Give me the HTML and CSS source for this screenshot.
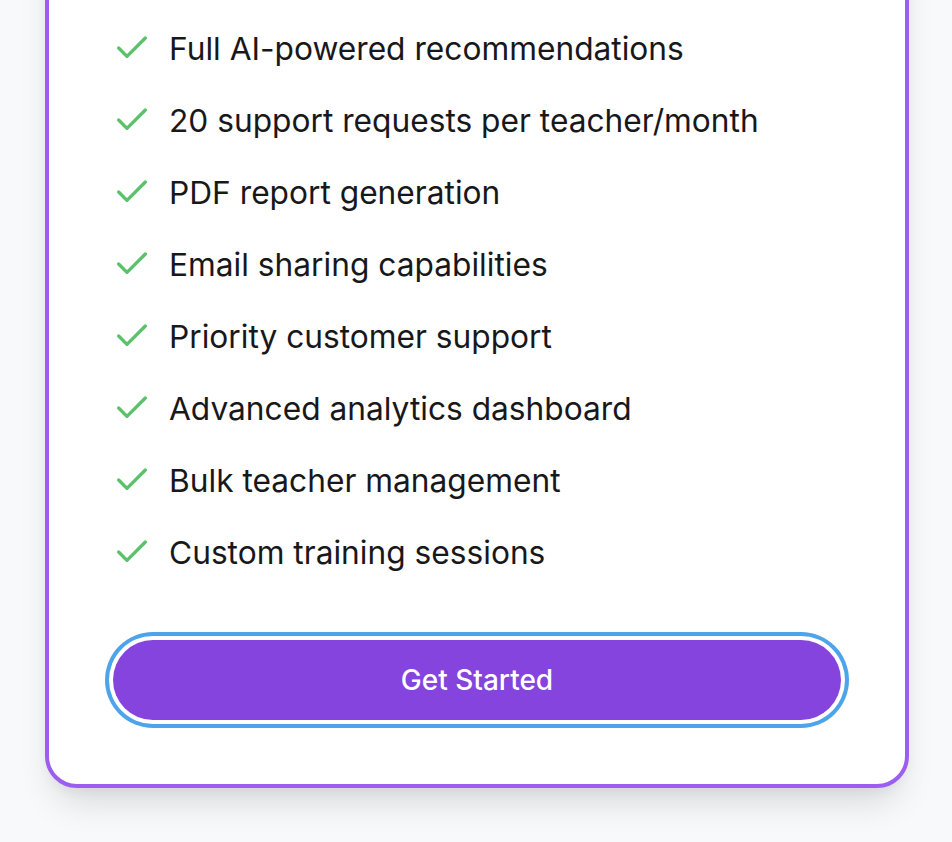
FILE: index.html
```html
<!DOCTYPE html>
<html lang="en">
<head>
<meta charset="utf-8">
<title>Pricing plan</title>
<link rel="stylesheet" href="styles.css">
</head>
<body>
<div class="page">
  <div class="card">
    <ul class="features">
      <li class="feature"><svg class="check" viewBox="0 0 24 24"><path d="M20 6 9 17l-5-5"/></svg><span>Full AI-powered recommendations</span></li>
      <li class="feature"><svg class="check" viewBox="0 0 24 24"><path d="M20 6 9 17l-5-5"/></svg><span>20 support requests per teacher/month</span></li>
      <li class="feature"><svg class="check" viewBox="0 0 24 24"><path d="M20 6 9 17l-5-5"/></svg><span>PDF report generation</span></li>
      <li class="feature"><svg class="check" viewBox="0 0 24 24"><path d="M20 6 9 17l-5-5"/></svg><span>Email sharing capabilities</span></li>
      <li class="feature"><svg class="check" viewBox="0 0 24 24"><path d="M20 6 9 17l-5-5"/></svg><span>Priority customer support</span></li>
      <li class="feature"><svg class="check" viewBox="0 0 24 24"><path d="M20 6 9 17l-5-5"/></svg><span>Advanced analytics dashboard</span></li>
      <li class="feature"><svg class="check" viewBox="0 0 24 24"><path d="M20 6 9 17l-5-5"/></svg><span>Bulk teacher management</span></li>
      <li class="feature"><svg class="check" viewBox="0 0 24 24"><path d="M20 6 9 17l-5-5"/></svg><span>Custom training sessions</span></li>
    </ul>
    <button class="cta" type="button">Get Started</button>
  </div>
</div>
</body>
</html>
```

FILE: styles.css
```css
html, body {
  margin: 0;
  padding: 0;
  background: #f8f9fb;
  font-family: Inter, "Noto Sans", sans-serif;
}

.page {
  padding: 0 43px 54px 45px;
}

.card {
  margin-top: -100px;
  width: 864px;
  box-sizing: border-box;
  background: #ffffff;
  border: 4px solid #9c5eee;
  border-radius: 32px;
  padding: 124px 64px 64px 64px;
  box-shadow: 0 22px 36px -10px rgba(0, 0, 0, 0.14), 0 6px 14px -4px rgba(0, 0, 0, 0.06);
}

.features {
  list-style: none;
  margin: 0 0 68px -1px;
  padding: 0;
  display: flex;
  flex-direction: column;
  gap: 32px;
}

.feature {
  display: flex;
  align-items: center;
  gap: 17px;
  height: 40px;
  font-size: 31.7px;
  color: #18181b;
  letter-spacing: 0;
}

.check {
  width: 40px;
  height: 40px;
  flex: none;
  fill: none;
  stroke: #5cc16a;
  stroke-width: 2;
  stroke-linecap: round;
  stroke-linejoin: round;
}

.cta {
  display: block;
  width: 100%;
  height: 80px;
  border: none;
  border-radius: 40px;
  background: #8544de;
  color: #ffffff;
  font-family: Inter, "Noto Sans", sans-serif;
  font-size: 28px;
  font-weight: 500;
  box-shadow: 0 0 0 4px #ffffff, 0 0 0 8px #4ea4ea;
  cursor: pointer;
}
```
